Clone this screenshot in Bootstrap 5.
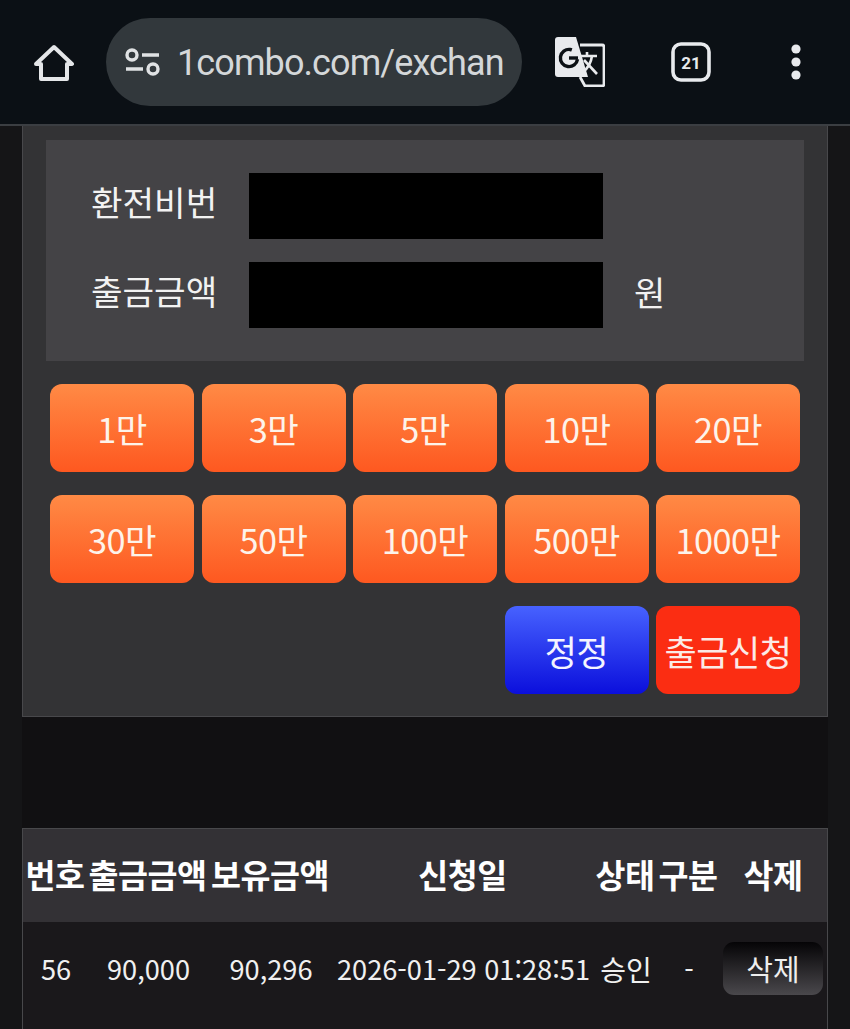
<!DOCTYPE html>
<html lang="ko">
<head>
    <meta charset="UTF-8">
    <meta name="viewport" content="width=device-width, initial-scale=1.0">
    <title>1combo</title>
    <link href="https://cdn.jsdelivr.net/npm/bootstrap@5.3.0/dist/css/bootstrap.min.css" rel="stylesheet">
    <style>
        html, body { height: 1029px; overflow: hidden; }
        body {
            background: #151517;
            color: #f2f2f2;
            font-family: "Noto Sans CJK KR", "Noto Sans", sans-serif;
        }
        /* browser chrome */
        .chrome-bar {
            height: 126px;
            background: #0b1015;
            border-bottom: 2px solid #3b3e42;
            padding: 18px 0 0 34px;
            align-items: flex-start;
        }
        .chrome-home { width: 40px; height: 38px; margin-top: 26px; }
        .url-pill {
            width: 416px;
            height: 88px;
            margin-left: 32px;
            padding-left: 19px;
            border-radius: 44px;
            background: #32383c;
            overflow: hidden;
        }
        .url-text {
            margin-left: 16px;
            font-family: Roboto, sans-serif;
            font-size: 36px;
            letter-spacing: -0.9px;
            color: #d4d7d9;
            white-space: nowrap;
            padding-top: 2px;
        }
        .chrome-translate { width: 50px; height: 50px; margin: 19px 0 0 33px; }
        .chrome-tabs { width: 40px; height: 40px; margin: 24px 0 0 66px; }
        .chrome-dots { width: 12px; height: 36px; margin: 26px 0 0 79px; }

        .exchange-panel {
            margin: 0 22px;
            height: 591px;
            padding: 14px 23px 0;
            background: #333335;
            border: solid #48484b;
            border-width: 0 1px 1px 1px;
        }
        .form-box {
            height: 221px;
            padding: 33px 0 0 45px;
            background: #444346;
            gap: 23px;
        }
        .form-line { height: 66px; }
        .form-label-txt { width: 158px; font-size: 34.3px; line-height: 1; padding-bottom: 10px; }
        .black-input {
            width: 354px;
            height: 66px;
            background: #000;
            border: 0;
            border-radius: 0;
        }
        .won-txt { margin-left: 31px; font-size: 34px; line-height: 1; padding-bottom: 6px; }

        .amount-grid {
            display: grid;
            grid-template-columns: repeat(5, 144px);
            grid-auto-rows: 88px;
            gap: 23px 7.5px;
            padding: 23px 4px 0;
        }
        .amount-btn {
            padding: 0;
            border: 0;
            border-radius: 12px;
            color: #fdf3ea;
            font-size: 34.3px;
            line-height: 1;
            white-space: nowrap;
            letter-spacing: -0.5px;
        }
        .btn-orange { background: linear-gradient(#ff8a45, #fe5820); }
        .btn-blue { background: linear-gradient(#4762ff, #0b0fdc); color: #f4f4ff; grid-column: 4; }
        .btn-red { background: #fb2d12; color: #fbeae6; }
        .btn-blue, .btn-red { font-size: 35px; }

        .gap-band { height: 111px; background: #111012; margin: 0 22px; }

        .history-wrap { margin: 0 22px; border: solid #48484b; border-width: 1px 1px 0 1px; }
        .history-table { table-layout: fixed; width: 804px; margin: 0; --bs-table-bg: transparent; --bs-table-color: #f2f2f2; }
        .history-table th, .history-table td {
            border: 0;
            padding: 0;
            text-align: center;
            vertical-align: middle;
            white-space: nowrap;
        }
        .history-table thead tr { height: 93px; background: #333135; }
        .history-table th { font-size: 32.6px; font-weight: 700; letter-spacing: -0.5px; color: #fff; padding-bottom: 2px; }
        .history-table tbody tr { height: 108px; background: #1a181b; }
        .history-table td { font-size: 27.2px; color: #f0f0f0; padding: 0 0 15px 2px; }
        .history-table td:last-child { padding-left: 0; }
        .status-txt { font-size: 28px; }
        .delete-btn {
            width: 100px;
            height: 53px;
            padding: 0;
            border: 0;
            border-radius: 11px;
            font-size: 29px;
            line-height: 1;
            color: #eeeeee;
            background: linear-gradient(#050406, #4a484c);
        }
    </style>
</head>
<body>
    <div class="chrome-bar d-flex">
        <svg class="chrome-home" viewBox="0 0 40 38" fill="none" stroke="#e4e6e8" stroke-width="4" stroke-linejoin="round">
            <path d="M2 20 20 3l18 17h-5v15H7V20z"/>
        </svg>
        <div class="url-pill d-flex align-items-center">
            <svg width="36" height="28" viewBox="0 0 36 28" fill="none" stroke="#e0e2e4" stroke-width="3.4" class="flex-shrink-0">
                <circle cx="7" cy="7" r="5"/>
                <path d="M17 7h17M1 21h17"/>
                <circle cx="28" cy="21" r="5"/>
            </svg>
            <span class="url-text">1combo.com/exchan</span>
        </div>
        <svg class="chrome-translate" viewBox="0 0 50 50">
            <path d="M25 8h22a2 2 0 0 1 2 2v37a2 2 0 0 1-2 2H30l-5-9" fill="none" stroke="#e8eaed" stroke-width="2.8"/>
            <path d="M3 0h18l12 40H3a3 3 0 0 1-3-3V3a3 3 0 0 1 3-3z" fill="#e8eaed"/>
            <circle cx="14" cy="21" r="8.6" fill="none" stroke="#0b1015" stroke-width="3.4" stroke-dasharray="42 12" transform="rotate(8 14 21)"/>
            <path d="M14 21h9" stroke="#0b1015" stroke-width="3.4"/>
            <path d="M23 19h19M32 15v4M37 19c-1 7-4 12-9 16" fill="none" stroke="#e8eaed" stroke-width="2.6"/>
            <path d="M29 23l13 14" fill="none" stroke="#e8eaed" stroke-width="2.6"/>
        </svg>
        <svg class="chrome-tabs" viewBox="0 0 40 40">
            <rect x="2" y="2" width="36" height="36" rx="8" fill="none" stroke="#e8eaed" stroke-width="3.6"/>
            <text x="20" y="26.5" text-anchor="middle" font-family="Roboto, sans-serif" font-weight="700" font-size="17" fill="#e8eaed">21</text>
        </svg>
        <svg class="chrome-dots" viewBox="0 0 12 36" fill="#e8eaed">
            <circle cx="6" cy="5" r="4.6"/>
            <circle cx="6" cy="18" r="4.6"/>
            <circle cx="6" cy="31" r="4.6"/>
        </svg>
    </div>

    <div class="exchange-panel">
        <div class="form-box d-flex flex-column">
            <div class="form-line d-flex align-items-center">
                <div class="form-label-txt">환전비번</div>
                <input type="password" class="black-input" aria-label="환전비번">
            </div>
            <div class="form-line d-flex align-items-center">
                <div class="form-label-txt">출금금액</div>
                <input type="text" class="black-input" aria-label="출금금액">
                <span class="won-txt">원</span>
            </div>
        </div>
        <div class="amount-grid">
            <button class="btn amount-btn btn-orange">1만</button>
            <button class="btn amount-btn btn-orange">3만</button>
            <button class="btn amount-btn btn-orange">5만</button>
            <button class="btn amount-btn btn-orange">10만</button>
            <button class="btn amount-btn btn-orange">20만</button>
            <button class="btn amount-btn btn-orange">30만</button>
            <button class="btn amount-btn btn-orange">50만</button>
            <button class="btn amount-btn btn-orange">100만</button>
            <button class="btn amount-btn btn-orange">500만</button>
            <button class="btn amount-btn btn-orange">1000만</button>
            <button class="btn amount-btn btn-blue">정정</button>
            <button class="btn amount-btn btn-red">출금신청</button>
        </div>
    </div>

    <div class="gap-band"></div>

    <div class="history-wrap">
        <table class="table history-table">
            <colgroup>
                <col style="width: 64px">
                <col style="width: 121px">
                <col style="width: 124px">
                <col style="width: 261px">
                <col style="width: 64px">
                <col style="width: 62px">
                <col style="width: 108px">
            </colgroup>
            <thead>
                <tr>
                    <th>번호</th>
                    <th>출금금액</th>
                    <th>보유금액</th>
                    <th>신청일</th>
                    <th>상태</th>
                    <th>구분</th>
                    <th>삭제</th>
                </tr>
            </thead>
            <tbody>
                <tr>
                    <td>56</td>
                    <td>90,000</td>
                    <td>90,296</td>
                    <td>2026-01-29 01:28:51</td>
                    <td><span class="status-txt">승인</span></td>
                    <td>-</td>
                    <td><button class="btn delete-btn">삭제</button></td>
                </tr>
            </tbody>
        </table>
    </div>

    <script src="https://cdn.jsdelivr.net/npm/bootstrap@5.3.0/dist/js/bootstrap.bundle.min.js"></script>
</body>
</html>
